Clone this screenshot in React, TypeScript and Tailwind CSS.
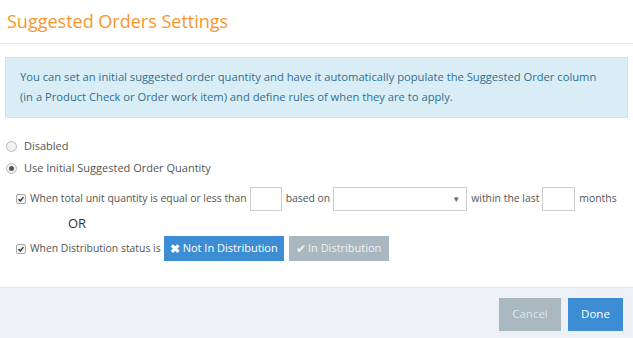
import React from "react";

function Radio({ checked }: { checked?: boolean }) {
  return (
    <span className="w-[11px] h-[11px] rounded-full border border-[#b9b9b9] bg-[#f3f3f3] flex items-center justify-center shrink-0">
      {checked && <span className="w-[5px] h-[5px] rounded-full bg-[#555]" />}
    </span>
  );
}

function Check() {
  return (
    <span className="w-[10px] h-[10px] rounded-[2px] border border-[#a9a9a9] bg-[#f1f1f1] flex items-center justify-center shrink-0">
      <svg viewBox="0 0 10 10" width="8" height="8">
        <path d="M2 5.2 L4.2 7.3 L8 2.6" fill="none" stroke="#333" strokeWidth="1.8" />
      </svg>
    </span>
  );
}

export default function App() {
  return (
    <div className="w-[633px] h-[338px] bg-white flex flex-col text-[#555] whitespace-nowrap" style={{ fontFamily: '"Open Sans", sans-serif' }}>
      <div className="h-[44px] border-b border-[#e5e5e5] pl-[7px] flex items-center">
        <h1 className="text-[18px] text-[#f7962d] leading-none -mt-[2px]">Suggested Orders Settings</h1>
      </div>
      <div className="flex-1 pt-[13px] px-[5px]">
        <div className="h-[61px] bg-[#d9edf7] border border-[#c7e6f1] pl-[14px] pt-[9px] text-[11.2px] leading-[20px] text-[#31708f]">
          You can set an initial suggested order quantity and have it automatically populate the Suggested Order column
          <br />
          (in a Product Check or Order work item) and define rules of when they are to apply.
        </div>
        <div className="pt-[17px] pl-[1px] text-[11px] text-[#555]">
          <div className="flex items-center h-[22px] gap-[7px]">
            <Radio />
            Disabled
          </div>
          <div className="flex items-center h-[22px] gap-[7px]">
            <Radio checked />
            Use Initial Suggested Order Quantity
          </div>
          <div className="pl-[10px] pt-[8px] text-[10.4px]">
            <div className="flex items-center h-[24px]">
              <Check />
              <span className="ml-[4px]">When total unit quantity is equal or less than</span>
              <span className="w-[32px] h-[24px] border border-[#ccc] ml-[3px] shrink-0" />
              <span className="ml-[4px]">based on</span>
              <span className="w-[134px] h-[24px] border border-[#ccc] flex items-center justify-end pr-[6px] text-[8px] text-[#666] ml-[3px] shrink-0">▼</span>
              <span className="ml-[4px]">within the last</span>
              <span className="w-[33px] h-[24px] border border-[#ccc] ml-[3px] shrink-0" />
              <span className="ml-[4px]">months</span>
            </div>
            <div className="pl-[52px] h-[25px] flex items-center text-[13px] text-[#333]">OR</div>
            <div className="flex items-center h-[25px]">
              <Check />
              <span className="ml-[4px]">When Distribution status is</span>
              <span className="w-[120px] h-[25px] bg-[#3c8dd3] text-white text-[11px] flex items-center justify-center gap-[3px] ml-[3px] shrink-0">
                <span className="text-[12px] font-bold">✖</span>Not In Distribution
              </span>
              <span className="w-[100px] h-[25px] bg-[#a9b7c1] text-[#eef2f4] text-[11px] flex items-center justify-center gap-[2px] ml-[5px] shrink-0">
                <span className="text-[12px]">✔</span>In Distribution
              </span>
            </div>
          </div>
        </div>
      </div>
      <div className="h-[51px] bg-[#edf1f5] border-t border-[#e3e6ea] flex items-center justify-end gap-[7px] pr-[10px] pt-[2px]">
        <span className="w-[62px] h-[33px] bg-[#a9b7c1] text-[#dfe6eb] text-[11.5px] flex items-center justify-center">Cancel</span>
        <span className="w-[55px] h-[33px] bg-[#3c8dd3] text-white text-[11.5px] flex items-center justify-center">Done</span>
      </div>
    </div>
  );
}
